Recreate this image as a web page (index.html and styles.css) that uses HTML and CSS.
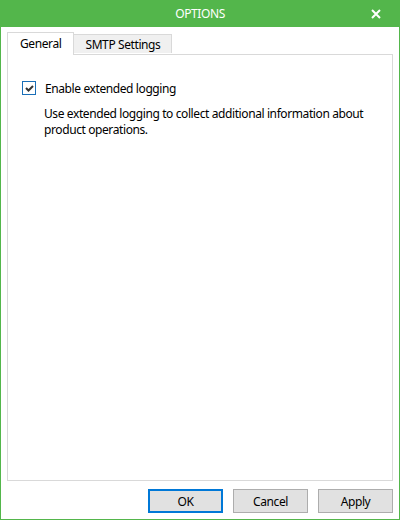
FILE: index.html
```html
<!DOCTYPE html>
<html lang="en">
<head>
    <meta charset="UTF-8">
    <title>Options</title>
    <link rel="stylesheet" href="styles.css">
</head>
<body>
    <div class="window">
        <div class="titlebar">
            <span class="title">OPTIONS</span>
            <svg class="close" width="10" height="10" viewBox="0 0 10 10">
                <path d="M1 1 L9 9 M9 1 L1 9" stroke="#fff" stroke-width="2"/>
            </svg>
        </div>
        <div class="body">
            <div class="tabs">
                <div class="tab selected">General</div>
                <div class="tab">SMTP Settings</div>
            </div>
            <div class="panel">
                <label class="check">
                    <span class="box">
                        <svg width="11" height="11" viewBox="0 0 11 11">
                            <path d="M2 5 L4.5 7.5 L9 3" fill="none" stroke="#333" stroke-width="2"/>
                        </svg>
                    </span>
                    Enable extended logging
                </label>
                <p class="hint">Use extended logging to collect additional information about product operations.</p>
            </div>
            <div class="buttons">
                <button class="btn default">OK</button>
                <button class="btn">Cancel</button>
                <button class="btn">Apply</button>
            </div>
        </div>
    </div>
</body>
</html>
```

FILE: styles.css
```css
body {
    margin: 0;
    font-family: "Noto Sans", "Open Sans", sans-serif;
    font-size: 12px;
    letter-spacing: -0.4px;
    color: #000;
}
.window {
    width: 400px;
    height: 520px;
    box-sizing: border-box;
    border: 1px solid #53b64b;
    border-top: none;
    display: flex;
    flex-direction: column;
    background: #fff;
}
.titlebar {
    height: 27px;
    background-color: #53b64b;
    color: #fff;
    display: flex;
    align-items: center;
    justify-content: center;
    position: relative;
    margin: 0 -1px;
}
.title {
    font-size: 12px;
}
.close {
    position: absolute;
    right: 19px;
    top: 9px;
}
.body {
    flex: 1;
    display: flex;
    flex-direction: column;
    padding: 5px 6px 6px;
}
.tabs {
    display: flex;
    align-items: flex-end;
    height: 22px;
}
.tab {
    height: 19px;
    box-sizing: border-box;
    padding: 0 11px;
    border: 1px solid #d9d9d9;
    border-bottom: none;
    background-color: #f0f0f0;
    display: flex;
    align-items: center;
    margin-bottom: 1px;
}
.tab.selected {
    height: 23px;
    background-color: #fff;
    padding: 0 12px 2px;
    margin-right: -1px;
    margin-bottom: -1px;
    position: relative;
    z-index: 1;
}
.panel {
    flex: 1;
    border: 1px solid #d9d9d9;
    padding: 26px 14px 0;
}
.check {
    display: flex;
    align-items: center;
    gap: 9px;
    height: 14px;
}
.box {
    width: 14px;
    height: 14px;
    box-sizing: border-box;
    border: 1px solid #1a6fb8;
    display: flex;
    align-items: center;
    justify-content: center;
}
.hint {
    margin: 11px 0 0 22px;
    line-height: 16px;
}
.buttons {
    display: flex;
    justify-content: flex-end;
    gap: 10px;
    margin-top: 8px;
}
.btn {
    width: 75px;
    height: 24px;
    font-family: inherit;
    font-size: 12px;
    letter-spacing: inherit;
    color: #000;
    background-color: #e1e1e1;
    border: 1px solid #adadad;
    padding: 0;
}
.btn.default {
    border: 2px solid #0078d7;
}
```
